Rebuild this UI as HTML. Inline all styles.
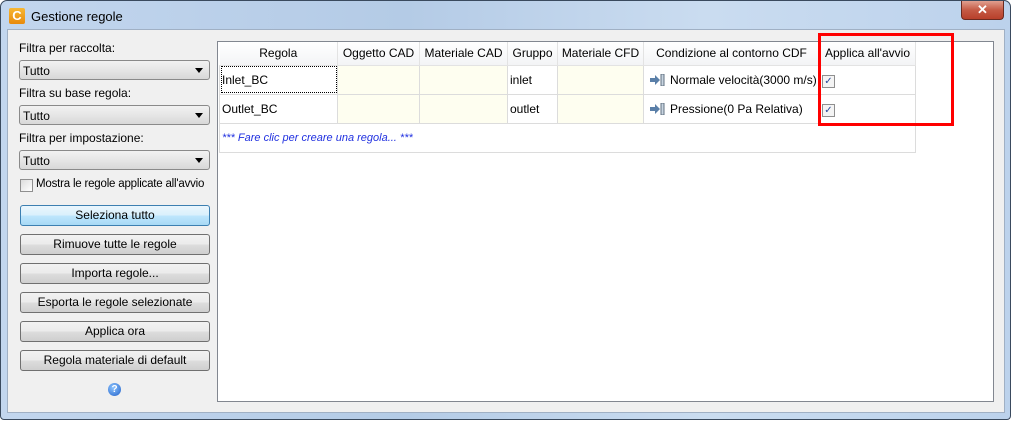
<!DOCTYPE html>
<html><head><meta charset="utf-8"><style>
*{box-sizing:border-box;margin:0;padding:0}
body{width:1013px;height:421px;overflow:hidden;background:#fff;font-family:"Liberation Sans",sans-serif;font-size:12px;color:#000;position:relative}
.win{position:absolute;left:0;top:0;width:1011px;height:420px;border:1px solid #3a4a5e;border-radius:7px 7px 4px 4px;background:linear-gradient(90deg,#c2d6ee,#b4cbe6 40%,#cadcf0 70%,#bcd2ec)}
.title{position:absolute;left:30px;top:8px;font-size:13px}
.icon{position:absolute;left:8px;top:7px;width:16px;height:16px;background:linear-gradient(#f7b733,#e88a0c);border-radius:2px;color:#fff;font-weight:bold;font-size:13px;line-height:16px;text-align:center}
.close{position:absolute;left:960px;top:0;width:43px;height:19px;border:1px solid #6b2a20;border-top:none;border-radius:0 0 4px 4px;background:linear-gradient(#e0a090,#c55a45 50%,#b8402b);color:#fff;text-align:center;font-weight:bold;font-size:13px;line-height:18px}
.client{position:absolute;left:7px;top:29px;width:998px;height:384px;background:#f0f0f0;border:1px solid #a0b0c4}
.lbl{position:absolute;left:19px;font-size:12px}
.combo{position:absolute;left:19px;width:191px;height:20px;border:1px solid #8a8a8a;border-radius:3px;background:linear-gradient(#f2f2f2,#e6e6e6 50%,#d8d8d8);padding:3px 3px;font-size:12px}
.combo:after{content:"";position:absolute;right:6px;top:7px;border:4px solid transparent;border-top:5px solid #000}
.btn{position:absolute;left:20px;width:190px;height:21px;border:1px solid #707070;border-radius:3px;background:linear-gradient(#f2f2f2,#ebebeb 50%,#dddddd 51%,#cfcfcf);text-align:center;line-height:19px;font-size:12px}
.btn.sel{border-color:#3c7fb1;background:linear-gradient(#eaf6fd,#d9f0fc 50%,#bee6fd 51%,#a7d9f5)}
.chk{position:absolute;width:13px;height:13px;border:1px solid #8f8f8f;background:linear-gradient(135deg,#dcdcdc,#fff)}
.panel{position:absolute;left:217px;top:41px;width:777px;height:361px;background:#fff;border:1px solid #828790}
table{position:absolute;left:1px;top:0;border-collapse:collapse;font-size:12px}
th{height:23px;font-weight:normal;border-right:1px solid #e3e3e3;background:linear-gradient(#fff,#f3f4f6);border-bottom:1px solid #e3e3e3;padding:0}
td{height:29px;border:1px solid #dcdcdc;padding:0 2px;white-space:nowrap}
td.y{background:#fefef0}
.bc{display:inline-block;width:16px;height:12px;vertical-align:-2px;margin:0 5px 0 3px}
.cb{display:inline-block;width:13px;height:13px;border:1px solid #8f8f8f;background:#f4f4f4;color:#2a4a9a;font-size:10px;line-height:11px;text-align:center;vertical-align:-2px}
.red{position:absolute;left:818px;top:33px;width:136px;height:93px;border:3px solid #f00}
</style></head><body>
<div class="win">
<div class="icon">C</div><div class="title">Gestione regole</div>
<div class="close">✕</div>
</div>
<div class="client"></div>
<div class="lbl" style="top:41px">Filtra per raccolta:</div>
<div class="combo" style="top:60px">Tutto</div>
<div class="lbl" style="top:86px">Filtra su base regola:</div>
<div class="combo" style="top:105px">Tutto</div>
<div class="lbl" style="top:131px">Filtra per impostazione:</div>
<div class="combo" style="top:150px">Tutto</div>
<div class="chk" style="left:20px;top:179px"></div>
<div class="lbl" style="left:36px;top:178px;font-size:11.5px;letter-spacing:-0.2px">Mostra le regole applicate all'avvio</div>
<div class="btn sel" style="top:205px">Seleziona tutto</div>
<div class="btn" style="top:234px">Rimuove tutte le regole</div>
<div class="btn" style="top:263px">Importa regole...</div>
<div class="btn" style="top:292px">Esporta le regole selezionate</div>
<div class="btn" style="top:321px">Applica ora</div>
<div class="btn" style="top:350px">Regola materiale di default</div>
<div style="position:absolute;left:108px;top:383px;width:13px;height:13px;border-radius:50%;background:radial-gradient(circle at 40% 35%,#8fc6ff,#1f5fc9);color:#fff;font-size:10px;font-weight:bold;text-align:center;line-height:13px">?</div>
<div class="panel">
<table>
<tr><th style="width:118px">Regola</th><th style="width:82px">Oggetto CAD</th><th style="width:88px">Materiale CAD</th><th style="width:50px">Gruppo</th><th style="width:86px">Materiale CFD</th><th style="width:176px">Condizione al contorno CDF</th><th style="width:96px">Applica all'avvio</th></tr>
<tr><td style="outline:1px dotted #000;outline-offset:-2px">Inlet_BC</td><td class="y"></td><td class="y"></td><td>inlet</td><td class="y"></td><td><svg class="bc" viewBox="0 0 16 12"><path d="M1 4h5V1l5 5-5 5V8H1z" fill="#5a7fa8"/><rect x="12" y="0" width="3" height="12" fill="#c8d4e0" stroke="#607080"/></svg>Normale velocità(3000 m/s)</td><td><span class="cb">✓</span></td></tr>
<tr><td>Outlet_BC</td><td class="y"></td><td class="y"></td><td>outlet</td><td class="y"></td><td><svg class="bc" viewBox="0 0 16 12"><path d="M1 4h5V1l5 5-5 5V8H1z" fill="#5a7fa8"/><rect x="12" y="0" width="3" height="12" fill="#c8d4e0" stroke="#607080"/></svg>Pressione(0 Pa Relativa)</td><td><span class="cb">✓</span></td></tr>
<tr><td colspan="7" style="color:#2030e0;font-style:italic;font-size:11px">*** Fare clic per creare una regola... ***</td></tr>
</table>
</div>
<div class="red"></div>
</body></html>
